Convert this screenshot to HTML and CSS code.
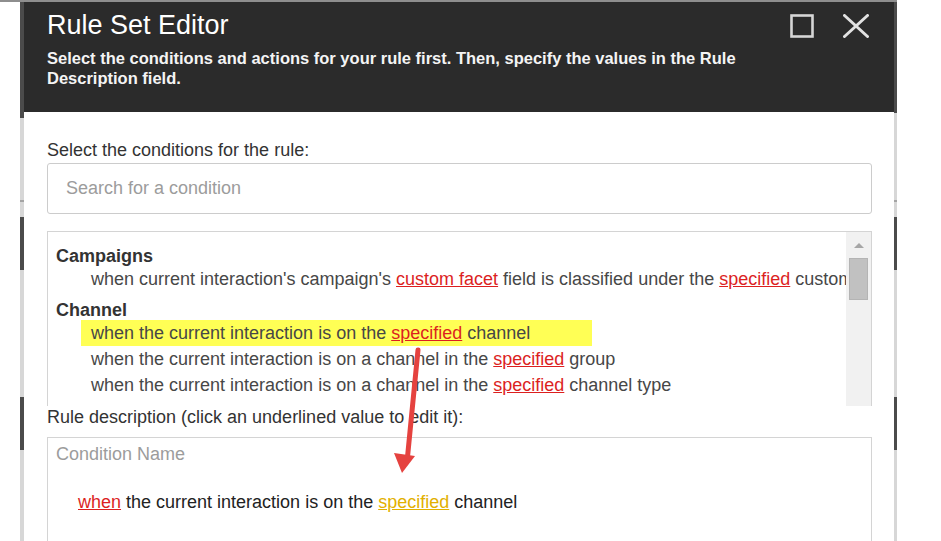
FILE: index.html
```html
<!DOCTYPE html>
<html lang="en">
<head>
    <meta charset="UTF-8">
    <meta name="viewport" content="width=device-width, initial-scale=1.0">
    <title>Rule Set Editor</title>
    <link rel="stylesheet" href="styles.css">
</head>
<body>
    <div class="screen">
        <div class="edge">
            <div class="seg dark s1"></div>
            <div class="seg light s2"></div>
            <div class="seg line"></div>
            <div class="seg light s3"></div>
            <div class="seg dark s4"></div>
            <div class="seg light s5"></div>
            <div class="seg dark s4"></div>
            <div class="seg light rest"></div>
        </div>

        <div class="dialog">
            <div class="dialog-head">
                <div class="head-text">
                    <h1>Rule Set Editor</h1>
                    <p>Select the conditions and actions for your rule first. Then, specify the values in the Rule Description field.</p>
                </div>
                <div class="win-buttons">
                    <svg class="btn-max" width="24" height="24" viewBox="0 0 24 24">
                        <rect x="1.5" y="1.5" width="21" height="21" fill="none" stroke="#d6d6d6" stroke-width="2.6"/>
                    </svg>
                    <svg class="btn-close" width="26" height="24" viewBox="0 0 26 24">
                        <path d="M1.5 1.5 L24.5 22.5 M24.5 1.5 L1.5 22.5" stroke="#e2e2e2" stroke-width="3" stroke-linecap="round"/>
                    </svg>
                </div>
            </div>

            <div class="dialog-body">
                <label class="field-label" for="search">Select the conditions for the rule:</label>
                <input id="search" class="search" type="text" placeholder="Search for a condition">

                <div class="condition-list">
                    <div class="list-content">
                        <div class="group">
                            <div class="group-name">Campaigns</div>
                            <div class="item">when current interaction's campaign's <a class="val">custom facet</a> field is classified under the <a class="val">specified</a> custom facet</div>
                        </div>
                        <div class="group">
                            <div class="group-name">Channel</div>
                            <div class="item marked">when the current interaction is on the <a class="val">specified</a> channel</div>
                            <div class="item">when the current interaction is on a channel in the <a class="val">specified</a> group</div>
                            <div class="item">when the current interaction is on a channel in the <a class="val">specified</a> channel type</div>
                        </div>
                    </div>
                    <div class="scrollbar">
                        <span class="arrow-up"></span>
                        <span class="thumb"></span>
                    </div>
                </div>

                <div class="field-label">Rule description (click an underlined value to edit it):</div>
                <div class="description">
                    <div class="cond-name">Condition Name</div>
                    <div class="rule-text"><a class="val">when</a> the current interaction is on the <a class="val picked">specified</a> channel</div>
                </div>
            </div>

            <!-- annotation drawn over the screenshot -->
            <svg class="note-arrow" width="60" height="135" viewBox="0 0 60 135">
                <path d="M53 5 L42.5 112" stroke="#e5423f" stroke-width="5" stroke-linecap="round"/>
                <polygon points="29,108 50,111 37,128" fill="#e5423f"/>
            </svg>
        </div>

        <div class="edge right">
            <div class="seg dark s1r"></div>
            <div class="seg light s2r"></div>
            <div class="seg line"></div>
            <div class="seg light s3"></div>
            <div class="seg dark s4"></div>
            <div class="seg light s5"></div>
            <div class="seg dark s4"></div>
            <div class="seg light rest"></div>
        </div>
    </div>
</body>
</html>
```

FILE: styles.css
```css
html, body{
    margin: 0;
    background-color: #ffffff;
    font-family: "Liberation Sans", Arial, sans-serif;
}
.screen{
    display: flex;
    height: 539px;
    padding-left: 20px;
    width: 877px;
    border-top: 2px solid #8e8e8e;
    overflow: hidden;
}

/* bits of the page behind the dialog */
.edge{
    width: 4px;
    display: flex;
    flex-direction: column;
}
.edge.right{
    width: 3px;
}
.seg.dark{ background-color: #4b4b4b; }
.seg.light{ background-color: #d7d7d7; }
.seg.line{ height: 2px; background-color: #a4a4a4; }
.s1{ height: 116px; }
.s1r{ height: 111px; }
.s2{ height: 82px; }
.s2r{ height: 87px; }
.s3{ height: 15px; }
.s4{ height: 53px; background-color: #5a5a5a; }
.s5{ height: 127px; }
.rest{ flex: 1; }

.dialog{
    position: relative;
    width: 870px;
    background-color: #ffffff;
    overflow: hidden;
}
.dialog-head{
    display: flex;
    height: 110px;
    box-sizing: border-box;
    padding: 7px 25px 0 23px;
    background-color: #2b2b2b;
    color: #ffffff;
}
.head-text{
    flex: 1;
}
.head-text h1{
    margin: 0;
    font-size: 27px;
    font-weight: normal;
    line-height: 32px;
}
.head-text p{
    margin: 7px 0 0 0;
    max-width: 730px;
    font-size: 16.5px;
    font-weight: bold;
    line-height: 20px;
    color: #f4f4f4;
}
.win-buttons{
    display: flex;
    gap: 29px;
    margin-top: 5px;
    height: 24px;
}

.dialog-body{
    padding: 27px 22px 0 23px;
}
.field-label{
    display: block;
    font-size: 18px;
    line-height: 22px;
    color: #333333;
}
.search{
    display: block;
    width: 100%;
    height: 51px;
    box-sizing: border-box;
    margin-top: 2px;
    padding: 0 18px;
    border: 1px solid #cccccc;
    border-radius: 3px;
    font-family: inherit;
    font-size: 18px;
    color: #333333;
}
.search::placeholder{
    color: #9c9c9c;
}

.condition-list{
    display: flex;
    height: 175px;
    box-sizing: border-box;
    margin-top: 17px;
    border: 1px solid #d4d4d4;
    border-bottom: none;
}
.list-content{
    flex: 1;
    overflow: hidden;
    padding: 14px 0 0 8px;
}
.group{
    margin-bottom: 8px;
}
.group-name{
    font-size: 18px;
    font-weight: bold;
    line-height: 20px;
    color: #333333;
}
.item{
    margin-left: 25px;
    padding-left: 10px;
    font-size: 18px;
    line-height: 26px;
    white-space: nowrap;
    color: #474747;
}
.item.marked{
    width: 511px;
    box-sizing: border-box;
    background-color: #ffff55;
}
.val{
    color: #dc1f1f;
    text-decoration: underline;
    cursor: pointer;
}
.val.picked{
    color: #e2b000;
}

.scrollbar{
    width: 25px;
    display: flex;
    flex-direction: column;
    align-items: center;
    background-color: #f1f1f1;
}
.arrow-up{
    width: 0;
    height: 0;
    margin-top: 11px;
    border-left: 5px solid transparent;
    border-right: 5px solid transparent;
    border-bottom: 5px solid #a6a6a6;
}
.thumb{
    width: 19px;
    height: 42px;
    box-sizing: border-box;
    margin-top: 10px;
    background-color: #c1c1c1;
    border: 1px solid #b4b4b4;
}

.description{
    height: 130px;
    margin-top: 9px;
    padding: 5px 8px 0 8px;
    border: 1px solid #d4d4d4;
}
.cond-name{
    font-size: 18px;
    line-height: 22px;
    color: #9c9c9c;
}
.rule-text{
    margin-top: 26px;
    padding-left: 22px;
    font-size: 18px;
    line-height: 22px;
    color: #222222;
}

.note-arrow{
    position: absolute;
    left: 341px;
    top: 343px;
}
```
